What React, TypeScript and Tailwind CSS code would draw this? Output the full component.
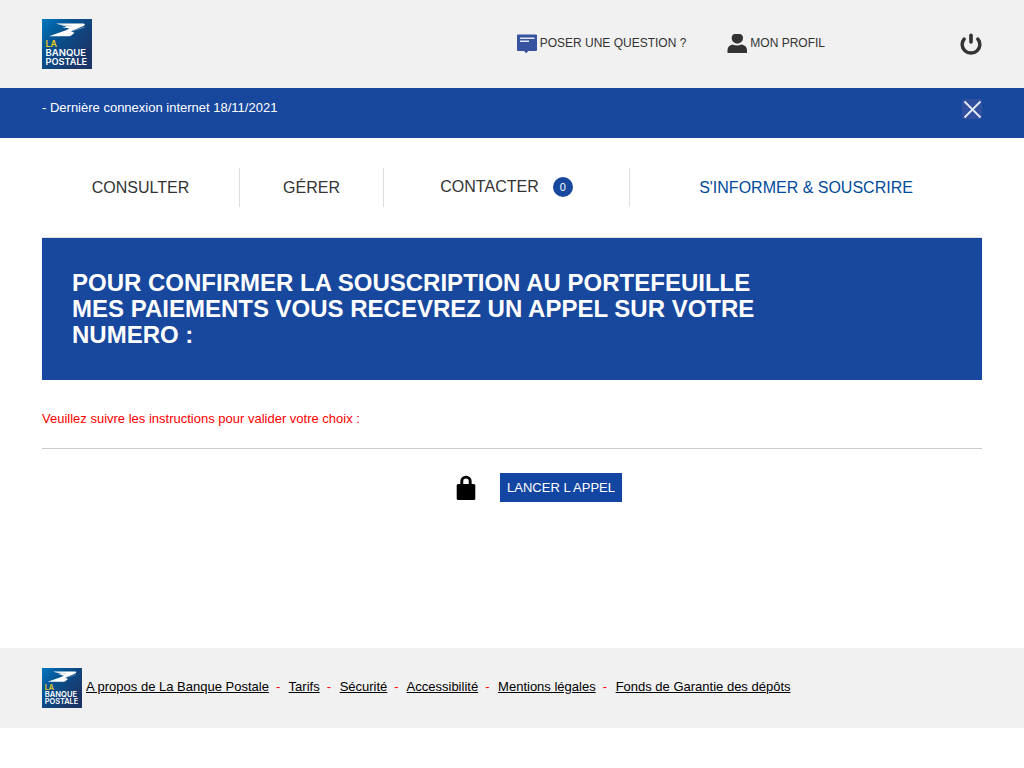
import React from 'react';

function Logo({ className }: { className: string }) {
  return (
    <svg viewBox="0 0 50 50" className={className} role="img" aria-label="La Banque Postale">
      <defs>
        <linearGradient id="logoBlue" x1="0" y1="0" x2="0.85" y2="0.75">
          <stop offset="0" stopColor="#0078c0" />
          <stop offset="0.4" stopColor="#065391" />
          <stop offset="1" stopColor="#1b3568" />
        </linearGradient>
      </defs>
      <rect width="50" height="50" fill="url(#logoBlue)" />
      <path d="M14 4.400H41.500C43.500 4.600 43 6.200 41.500 7L29 12.300L32.500 13.700L29.500 16.300Q28.500 17.200 27 17.200H7L24 11.200L27.500 9.500L20 8.300L25 7.800Z" fill="#fff" />
      <path d="M16 5.200L30 7.200M29 12.300L42.500 8.200" stroke="#9dbcd8" strokeWidth="0.600" />
      <g fontFamily="Inter, 'Liberation Sans', sans-serif" fontWeight="600">
        <text x="3.500" y="27.500" fontSize="8.800" fill="#f2cf1d">LA</text>
        <text x="3.500" y="36.500" fontSize="9.500" fill="#fff">BANQUE</text>
        <text x="3.500" y="45.500" fontSize="9.200" fill="#fff">POSTALE</text>
      </g>
    </svg>
  );
}

const footerLinks = [
  'A propos de La Banque Postale',
  'Tarifs',
  'Sécurité',
  'Accessibilité',
  'Mentions légales',
  'Fonds de Garantie des dépôts',
];

export default function App() {
  return (
    <div className="bg-white font-['Liberation_Sans',Arial,sans-serif] text-[13px] leading-5 text-[#333]">
      <header className="flex h-22 items-start bg-[#f1f1f1] px-[42px]">
        <a href="#" className="mt-[19px]">
          <Logo className="block size-[50px]" />
        </a>
        <div className="ml-auto mt-[33px] flex items-start text-xs leading-5">
          <a href="#" className="flex gap-[3px]">
            <svg viewBox="0 0 20 20" className="size-5" aria-hidden="true">
              <path d="M1 1.500H19Q20 1.500 20 2.500V17Q20 18 19 18H11L9.500 20.500L7 18H1Q0 18 0 17V2.500Q0 1.500 1 1.500Z" fill="#37529f" />
              <path d="M3 5.200H17.500M3 8.200H12" stroke="#e4e8f4" strokeWidth="1.500" />
            </svg>
            POSER UNE QUESTION ?
          </a>
          <a href="#" className="ml-[41px] flex gap-[3px]">
            <svg viewBox="0 0 20 20" className="size-5" fill="#333" aria-hidden="true">
              <path d="M7.500 1H13C15 1.500 16 3 16 5C16 8 13.500 10.500 10.300 10.500S4.700 8 4.700 5C4.700 3 5.500 1.500 7.500 1Z" />
              <path d="M0.500 20V17C0.500 14 2.800 12 5.500 11.500Q10 13.500 14.500 11.500C17.500 12 20 14 20 17V20Z" />
            </svg>
            MON PROFIL
          </a>
          <button type="button" aria-label="Déconnexion" className="ml-[135px]">
            <svg viewBox="0 0 22 22" className="size-[22px]" fill="none" stroke="#333" strokeWidth="3.400" strokeLinecap="round" aria-hidden="true">
              <path d="M4.200 6A8.900 8.500 0 1 0 17.800 6" />
              <path d="M11 2.200V9" strokeWidth="3.600" />
            </svg>
          </button>
        </div>
      </header>

      <section className="flex h-[50px] items-start justify-between bg-[#18479e] px-[42px] pt-2.5 text-white">
        <p>- Dernière connexion internet 18/11/2021</p>
        <button type="button" aria-label="Fermer" className="mt-px size-5 bg-[#324f9f]">
          <svg viewBox="0 0 20 20" className="size-5" stroke="#e5eaf5" strokeWidth="1.800" aria-hidden="true">
            <path d="M2.500 2.500L18.500 18.500M18.500 2.500L2.500 18.500" />
          </svg>
        </button>
      </section>

      <main className="min-h-[510px] px-[42px]">
        <nav className="border-b border-[#e1e1e1] py-[30px] text-base">
          <ul className="grid h-[39px] grid-cols-[198fr_144fr_246fr_352fr] text-center">
            <li className="flex items-center justify-center border-r border-[#ddd]">
              <a href="#">CONSULTER</a>
            </li>
            <li className="flex items-center justify-center border-r border-[#ddd]">
              <a href="#">GÉRER</a>
            </li>
            <li className="flex items-center justify-center border-r border-[#ddd] pb-0.5">
              <a href="#" className="flex items-center gap-3.5">
                CONTACTER
                <span className="size-5 rounded-full bg-[#18479e] text-[11px] leading-5 text-white">0</span>
              </a>
            </li>
            <li className="flex items-center justify-center text-[#004b9b]">
              <a href="#">S'INFORMER &amp; SOUSCRIRE</a>
            </li>
          </ul>
        </nav>

        <div className="bg-[#18479e] px-[30px] py-8">
          <h1 className="max-w-[705px] text-2xl leading-[26px] font-bold text-white">
            POUR CONFIRMER LA SOUSCRIPTION AU PORTEFEUILLE MES PAIEMENTS VOUS RECEVREZ UN APPEL SUR VOTRE NUMERO :
          </h1>
        </div>

        <p className="mt-[29px] border-b border-[#ccc] pb-[19px] text-[#f00]">
          Veuillez suivre les instructions pour valider votre choix :
        </p>

        <div className="mt-6 flex items-center justify-center gap-6 pl-[54px]">
          <svg viewBox="0 0 20 26" className="h-[26px] w-5" aria-hidden="true">
            <path d="M5.800 11V6.300a4.200 4.200 0 0 1 8.400 0V11" fill="none" stroke="#000" strokeWidth="2.900" />
            <rect x="0.700" y="9" width="18.600" height="16" rx="1.500" />
          </svg>
          <button type="button" className="h-[29px] bg-[#1346a2] px-[7px] text-white">
            LANCER L APPEL
          </button>
        </div>
      </main>

      <footer className="flex h-20 items-center gap-1 bg-[#f1f1f1] px-[42px]">
        <Logo className="block size-10" />
        <ul className="flex pb-0.5 text-black">
          {footerLinks.map((label, index) => (
            <li key={label}>
              {index > 0 && <span className="mr-[5px] ml-[7px] text-[#f00]">-</span>}{' '}
              <a href="#" className="underline">{label}</a>
            </li>
          ))}
        </ul>
      </footer>
    </div>
  );
}
